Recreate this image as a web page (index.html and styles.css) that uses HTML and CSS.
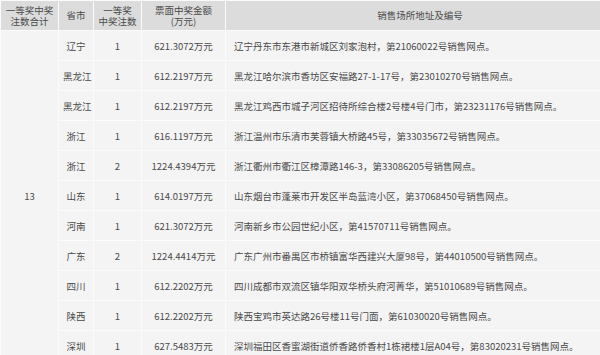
FILE: index.html
```html
<!DOCTYPE html>
<html lang="zh-CN">
<head>
<meta charset="utf-8">
<title>一等奖中奖情况</title>
<link rel="stylesheet" href="styles.css">
</head>
<body>
<table class="prize">
  <colgroup>
    <col class="c1"><col class="c2"><col class="c3"><col class="c4"><col class="c5">
  </colgroup>
  <thead>
    <tr>
      <th>一等奖中奖<br>注数合计</th>
      <th>省市</th>
      <th>一等奖<br>中奖注数</th>
      <th>票面中奖金额<br>(万元)</th>
      <th>销售场所地址及编号</th>
    </tr>
  </thead>
  <tbody>
    <tr><td rowspan="11">13</td><td>辽宁</td><td>1</td><td>621.3072万元</td><td class="addr">辽宁丹东市东港市新城区刘家泡村，第21060022号销售网点。</td></tr>
    <tr><td>黑龙江</td><td>1</td><td>612.2197万元</td><td class="addr">黑龙江哈尔滨市香坊区安福路27-1-17号，第23010270号销售网点。</td></tr>
    <tr><td>黑龙江</td><td>1</td><td>612.2197万元</td><td class="addr">黑龙江鸡西市城子河区招待所综合楼2号楼4号门市，第23231176号销售网点。</td></tr>
    <tr><td>浙江</td><td>1</td><td>616.1197万元</td><td class="addr">浙江温州市乐清市芙蓉镇大桥路45号，第33035672号销售网点。</td></tr>
    <tr><td>浙江</td><td>2</td><td>1224.4394万元</td><td class="addr">浙江衢州市衢江区樟潭路146-3，第33086205号销售网点。</td></tr>
    <tr><td>山东</td><td>1</td><td>614.0197万元</td><td class="addr">山东烟台市蓬莱市开发区半岛蓝湾小区，第37068450号销售网点。</td></tr>
    <tr><td>河南</td><td>1</td><td>621.3072万元</td><td class="addr">河南新乡市公园世纪小区，第41570711号销售网点。</td></tr>
    <tr><td>广东</td><td>2</td><td>1224.4414万元</td><td class="addr">广东广州市番禺区市桥镇富华西建兴大厦98号，第44010500号销售网点。</td></tr>
    <tr><td>四川</td><td>1</td><td>612.2202万元</td><td class="addr">四川成都市双流区镇华阳双华桥头府河菁华，第51010689号销售网点。</td></tr>
    <tr><td>陕西</td><td>1</td><td>612.2202万元</td><td class="addr">陕西宝鸡市英达路26号楼11号门面，第61030020号销售网点。</td></tr>
    <tr><td>深圳</td><td>1</td><td>627.5483万元</td><td class="addr">深圳福田区香蜜湖街道侨香路侨香村1栋裙楼1层A04号，第83020231号销售网点。</td></tr>
  </tbody>
</table>
</body>
</html>
```
FILE: styles.css
```css
html, body {
  margin: 0;
  padding: 0;
  overflow: hidden;
  background: #ffffff;
}
.prize {
  width: 615px;
  border-collapse: collapse;
  table-layout: fixed;
  font-family: "Noto Sans CJK SC", "Microsoft YaHei", sans-serif;
  font-size: 9.5px;
  color: #4a4a4a;
}
.c1 { width: 58px; }
.c2 { width: 35px; }
.c3 { width: 48px; }
.c4 { width: 84px; }
.prize th,
.prize td {
  border: 1px solid #fbfbfb;
  text-align: center;
  vertical-align: middle;
  padding: 0 4px;
  white-space: nowrap;
}
.prize th {
  height: 29px;
  background: #dcdcdc;
  font-weight: normal;
  line-height: 11px;
}
.prize td {
  height: 29px;
  background: #f4f4f4;
  line-height: 12px;
}
.prize td.addr {
  text-align: left;
  padding-left: 8px;
}
```
